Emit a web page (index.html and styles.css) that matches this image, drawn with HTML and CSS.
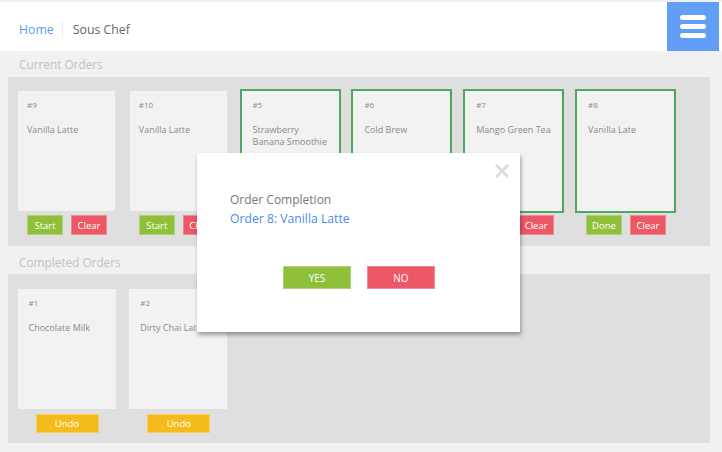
FILE: index.html
```html
<!DOCTYPE html>
<html lang="en">
<head>
    <meta charset="UTF-8">
    <meta name="viewport" content="width=device-width, initial-scale=1.0">
    <title>Sous Chef</title>
    <link rel="stylesheet" href="styles.css">
</head>
<body>
    <header class="topbar">
        <nav class="crumbs">
            <a class="crumb-home" href="#">Home</a>
            <span class="crumb-sep"></span>
            <span class="crumb-page">Sous Chef</span>
        </nav>
        <button class="menu-btn" aria-label="Menu">
            <span></span><span></span><span></span>
        </button>
    </header>

    <main class="content">
        <h2 class="section-title">Current Orders</h2>
        <section class="panel">
            <div class="order">
                <div class="card"><div class="num">#9</div><div class="name">Vanilla Latte</div></div>
                <div class="actions"><button class="btn green">Start</button><button class="btn red">Clear</button></div>
            </div>
            <div class="order">
                <div class="card"><div class="num">#10</div><div class="name">Vanilla Latte</div></div>
                <div class="actions"><button class="btn green">Start</button><button class="btn red">Clear</button></div>
            </div>
            <div class="order">
                <div class="card active"><div class="num">#5</div><div class="name">Strawberry Banana Smoothie</div></div>
                <div class="actions"><button class="btn green">Done</button><button class="btn red">Clear</button></div>
            </div>
            <div class="order">
                <div class="card active"><div class="num">#6</div><div class="name">Cold Brew</div></div>
                <div class="actions"><button class="btn green">Done</button><button class="btn red">Clear</button></div>
            </div>
            <div class="order">
                <div class="card active"><div class="num">#7</div><div class="name">Mango Green Tea</div></div>
                <div class="actions"><button class="btn green">Done</button><button class="btn red">Clear</button></div>
            </div>
            <div class="order">
                <div class="card active"><div class="num">#8</div><div class="name">Vanilla Late</div></div>
                <div class="actions"><button class="btn green">Done</button><button class="btn red">Clear</button></div>
            </div>
        </section>

        <h2 class="section-title">Completed Orders</h2>
        <section class="panel done-panel">
            <div class="order">
                <div class="card"><div class="num">#1</div><div class="name">Chocolate Milk</div></div>
                <div class="actions"><button class="btn yellow">Undo</button></div>
            </div>
            <div class="order">
                <div class="card"><div class="num">#2</div><div class="name">Dirty Chai Latte</div></div>
                <div class="actions"><button class="btn yellow">Undo</button></div>
            </div>
        </section>
    </main>

    <div class="modal">
        <button class="modal-close" aria-label="Close">
            <svg width="14" height="14" viewBox="0 0 14 14"><path d="M2 2L12 12M12 2L2 12" stroke="#dcdcdc" stroke-width="3" stroke-linecap="square"/></svg>
        </button>
        <div class="modal-title">Order Completion</div>
        <div class="modal-order">Order 8: Vanilla Latte</div>
        <div class="modal-actions">
            <button class="btn green big">YES</button>
            <button class="btn red big">NO</button>
        </div>
    </div>
</body>
</html>
```

FILE: styles.css
```css
body {
    margin: 0;
    background: #f1f1f1;
    font-family: "Open Sans", "Noto Sans", sans-serif;
    height: 452px;
    overflow: hidden;
}
.topbar {
    display: flex;
    justify-content: space-between;
    align-items: stretch;
    height: 49px;
    margin-top: 2px;
    background: #fff;
}
.crumbs {
    display: flex;
    align-items: center;
    padding: 5px 0 0 19px;
    font-size: 12.3px;
}
.crumb-home {
    color: #5b9bf0;
    text-decoration: none;
}
.crumb-sep {
    width: 1px;
    height: 18px;
    background: #eeeeee;
    margin: 0 10px 0 8px;
}
.crumb-page {
    color: #666;
}
.menu-btn {
    width: 52px;
    margin-right: 3px;
    border: none;
    background: #619ef5;
    display: flex;
    flex-direction: column;
    justify-content: center;
    align-items: center;
    gap: 4.5px;
    padding: 0;
}
.menu-btn span {
    width: 26px;
    height: 4.5px;
    border-radius: 3px;
    background: #fff;
}
.content {
    padding: 0 12px 0 8px;
}
.section-title {
    margin: 0;
    padding-left: 11px;
    height: 26px;
    line-height: 27px;
    font-size: 11.8px;
    font-weight: normal;
    color: #c2c2c2;
}
.panel + .section-title {
    height: 28px;
    line-height: 32px;
}
.panel {
    display: flex;
    gap: 14.8px;
    background: #dfdfdf;
    padding: 14px 10px 11px;
}
.done-panel {
    padding: 15px 10px 10px;
}
.order {
    width: 97px;
    display: flex;
    flex-direction: column;
    align-items: center;
}
.card {
    box-sizing: border-box;
    width: 97px;
    height: 120px;
    background: #f2f2f2;
    padding: 9px 4px 9px 9px;
    color: #8a8a8a;
}
.done-panel .card {
    width: 98px;
    padding-left: 11px;
}
.card.active {
    outline: 2px solid #4ea864;
    padding-left: 11px;
    padding-right: 8px;
}
.num {
    font-size: 8px;
    height: 10px;
    line-height: 10px;
}
.name {
    margin-top: 14px;
    font-size: 9px;
    line-height: 11.5px;
}
.actions {
    display: flex;
    gap: 8px;
    margin-top: 4px;
    margin-left: 1px;
}
.done-panel .actions {
    margin-top: 5px;
}
.btn {
    box-sizing: border-box;
    width: 36px;
    height: 20px;
    padding: 0;
    border: 1px solid rgba(255, 255, 255, 0.3);
    color: #fff;
    font-family: inherit;
    font-size: 9.5px;
    line-height: 17px;
}
.green { background: #8fc03a; }
.red { background: #ec5866; }
.yellow {
    width: 63px;
    height: 19px;
    background: #f3bb1b;
}
.modal {
    position: absolute;
    left: 197px;
    top: 153px;
    width: 323px;
    height: 179px;
    box-sizing: border-box;
    padding: 37px 33px 0;
    background: #fff;
    box-shadow: 1px 3px 4px rgba(0, 0, 0, 0.35);
}
.modal-close {
    position: absolute;
    right: 11px;
    top: 11px;
    width: 14px;
    height: 14px;
    padding: 0;
    border: none;
    background: none;
}
.modal-title {
    font-size: 12px;
    line-height: 19px;
    color: #777;
}
.modal-order {
    font-size: 12.2px;
    line-height: 19px;
    color: #4d8ce6;
}
.modal-actions {
    display: flex;
    justify-content: center;
    gap: 16px;
    margin-top: 38px;
    margin-left: 1px;
}
.btn.big {
    width: 68px;
    height: 23px;
    font-size: 10px;
    line-height: 20px;
}
```
